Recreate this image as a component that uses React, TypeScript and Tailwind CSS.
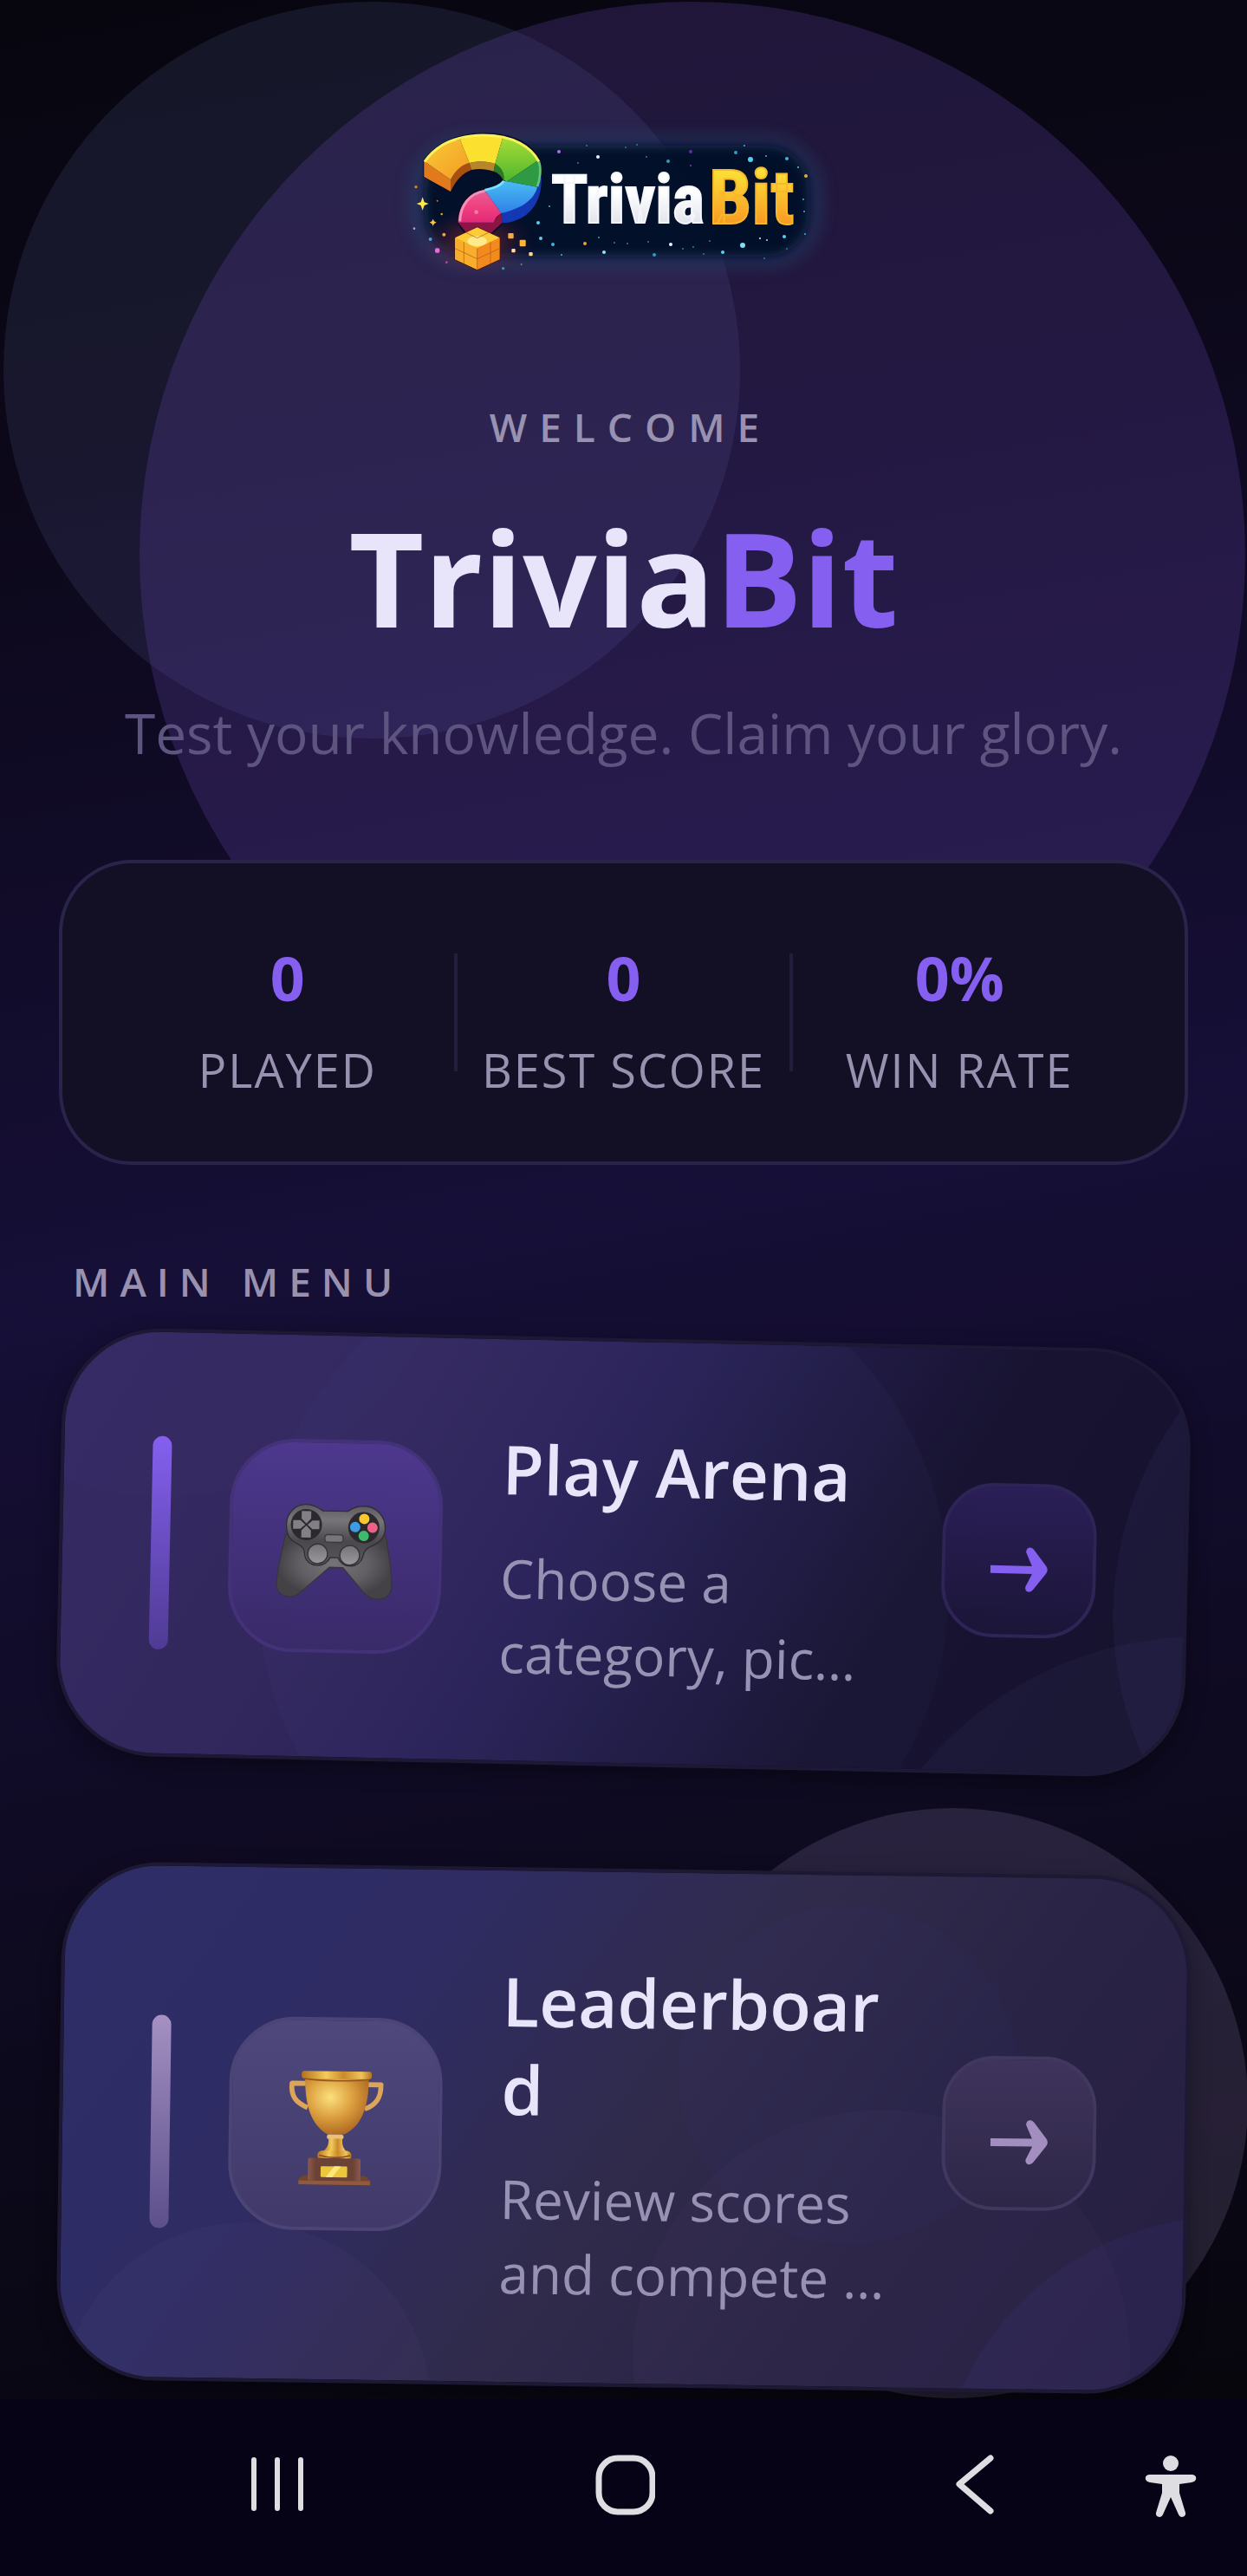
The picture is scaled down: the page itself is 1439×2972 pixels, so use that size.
import type { ReactNode } from 'react';
import clsx from 'clsx';

interface Stat {
  label: string;
  value: string;
}

interface MenuItem {
  title: string;
  description: string;
  icon: ReactNode;
  cardClass: string;
  barClass: string;
  iconClass: string;
  arrowClass: string;
  bubbles: string[];
}

const STATS: Stat[] = [
  { label: 'PLAYED', value: '0' },
  { label: 'BEST SCORE', value: '0' },
  { label: 'WIN RATE', value: '0%' },
];

// x, y, radius, colour
const STARS: [number, number, number, string][] = [
  [55, 45, 2, '#b26cf0'],
  [100, 51, 2, '#e8f4ff'],
  [207, 45, 2, '#5d2fa8'],
  [207, 61, 1, '#7d3fc4'],
  [181, 56, 2, '#2f9fc0'],
  [259, 46, 2, '#2f9fc0'],
  [269, 38, 1, '#3fb6d8'],
  [276, 54, 3, '#55cdec'],
  [294, 50, 1, '#3fb6d8'],
  [318, 53, 2, '#3fb6d8'],
  [331, 63, 1, '#59c8e8'],
  [340, 73, 2, '#e0b040'],
  [337, 100, 1, '#3fb6d8'],
  [338, 114, 1, '#3fb6d8'],
  [339, 140, 1, '#3fb6d8'],
  [315, 143, 2, '#59d2f0'],
  [295, 147, 1, '#9fe4f4'],
  [287, 145, 1, '#e8f4ff'],
  [267, 153, 3, '#7fe0f6'],
  [244, 161, 2, '#59d2f0'],
  [184, 152, 2, '#f4f0ff'],
  [165, 164, 2, '#2f9fc0'],
  [107, 161, 2, '#8fe6f8'],
  [85, 151, 2, '#f0a030'],
  [101, 144, 1, '#2f9fc0'],
  [58, 164, 1, '#3fb6d8'],
  [48, 152, 2, '#3fb6d8'],
  [34, 145, 2, '#59d2f0'],
  [31, 127, 2, '#59d2f0'],
  [44, 108, 1, '#3fb6d8'],
  [132, 40, 1, '#2a7f9a'],
  [145, 37, 1, '#2a7f9a'],
  [156, 51, 1, '#2a7f9a'],
  [87, 38, 1, '#2a7f9a'],
  [77, 58, 1, '#2a7f9a'],
  [119, 150, 1, '#2a7f9a'],
  [134, 151, 1, '#2a7f9a'],
  [158, 149, 1, '#2a7f9a'],
  [198, 157, 1, '#2a7f9a'],
  [210, 155, 1, '#2a7f9a'],
  [229, 148, 1, '#2a7f9a'],
  [222, 163, 1, '#2a7f9a'],
  [292, 168, 1, '#2a7f9a'],
  [318, 157, 1, '#2a7f9a'],
];

function Logo() {
  return (
    <svg
      role="img"
      aria-label="TriviaBit logo"
      viewBox="10 0 540 200"
      className="w-[540px] max-w-full h-auto"
    >
      <defs>
        <filter id="soft" x="-20%" y="-40%" width="140%" height="180%">
          <feGaussianBlur stdDeviation="9" />
        </filter>
        <filter id="softer" x="-20%" y="-40%" width="140%" height="180%">
          <feGaussianBlur stdDeviation="6" />
        </filter>
        <linearGradient id="gold" x1="0" y1="0" x2="0" y2="1">
          <stop offset="0.2" stopColor="#fbe136" />
          <stop offset="0.8" stopColor="#f79a24" />
        </linearGradient>
        <linearGradient id="silver" x1="0" y1="0" x2="0" y2="1">
          <stop offset="0.4" stopColor="#ffffff" />
          <stop offset="1" stopColor="#d2d6e2" />
        </linearGradient>
        <linearGradient id="orangeFace" x1="0" y1="0" x2="1" y2="1">
          <stop offset="0" stopColor="#f8cb38" />
          <stop offset="1" stopColor="#f59a23" />
        </linearGradient>
        <linearGradient id="greenFace" x1="0" y1="0" x2="0" y2="1">
          <stop offset="0" stopColor="#a6dc35" />
          <stop offset="1" stopColor="#4fb62e" />
        </linearGradient>
        <linearGradient id="blueFace" x1="0" y1="0" x2="0" y2="1">
          <stop offset="0" stopColor="#49bdf3" />
          <stop offset="1" stopColor="#2f80e8" />
        </linearGradient>
        <linearGradient id="pinkFace" x1="0" y1="0" x2="0" y2="1">
          <stop offset="0" stopColor="#e2609a" />
          <stop offset="0.5" stopColor="#f0407f" />
          <stop offset="1" stopColor="#e22a77" />
        </linearGradient>
        <radialGradient id="ember">
          <stop offset="0" stopColor="#e0452f" stopOpacity="0.5" />
          <stop offset="1" stopColor="#7c1745" stopOpacity="0" />
        </radialGradient>
      </defs>

      {/* Glow and night sky */}
      <rect x="34" y="28" width="474" height="150" rx="64" fill="#24466e" opacity="0.5" filter="url(#soft)" />
      <rect x="50" y="38" width="444" height="128" rx="50" fill="#040a26" opacity="0.92" filter="url(#softer)" />
      <ellipse cx="110" cy="150" rx="66" ry="40" fill="url(#ember)" />

      <g transform="translate(150 0)">
        {STARS.map(([x, y, r, color]) => (
          <circle key={`${x}-${y}`} cx={x} cy={y} r={r} fill={color} />
        ))}
      </g>

      <g transform="translate(30 10) scale(0.33333)">
        {/* Question mark, depth faces first */}
        <path
          d="M58 137L58 192L150 243C172 200 200 168 240 166C275 166 305 170 328 205L334 215C300 228 260 228 215 258C190 275 176 300 176 350L200 388L296 386L328 352C395 345 466 300 464 190C466 90 380 43 265 43C170 43 95 80 58 137Z"
          fill="#0b1238"
          stroke="#0a0d24"
          strokeWidth="6"
        />
        <path d="M58 137L150 202L150 243L58 192Z" fill="#e07a1c" />
        <path d="M150 202C168 168 190 150 215 144L222 168C190 180 168 205 150 243Z" fill="#a8500f" />
        <path d="M215 144C245 136 275 137 304 147L299 173C270 163 245 163 222 168Z" fill="#b8862a" />
        <path d="M304 147C325 158 338 180 334 206C325 188 315 178 299 173Z" fill="#2b7a24" />
        <path d="M464 190C470 290 410 350 328 352L325 316C400 300 440 270 450 226Z" fill="#1437b4" />
        <path d="M176 350L296 350L325 316L328 352L290 386L205 386Z" fill="#8c1546" />
        <path d="M58 137C85 95 130 72 182 62L215 144C190 150 168 168 150 202Z" fill="url(#orangeFace)" />
        <path d="M182 62C230 46 285 46 330 58L304 147C275 137 245 136 215 144Z" fill="#fbe02f" />
        <path d="M330 58C385 66 435 95 452 136L345 208L334 204C338 180 325 158 304 147Z" fill="url(#greenFace)" />
        <path d="M452 136C464 160 464 195 450 227L345 208Z" fill="#2f9a44" />
        <path d="M334 206L345 208L450 227C440 270 400 300 325 318L268 238C295 232 322 225 334 206Z" fill="url(#blueFace)" />
        <path d="M268 238L325 318C312 326 302 338 299 350L176 350C178 290 210 250 268 238Z" fill="url(#pinkFace)" />
        <path d="M60 140C90 95 150 50 262 48C370 48 430 90 456 140" fill="none" stroke="#f7f25a" strokeWidth="9" />
        <path d="M456 140C464 165 460 200 450 226" fill="none" stroke="#62c878" strokeWidth="8" />
        <path d="M182 346C184 290 215 250 268 241" fill="none" stroke="#f48fb8" strokeWidth="9" />
        <path d="M268 238C295 232 322 225 334 206" fill="none" stroke="#7fe0f8" strokeWidth="8" />
        <circle cx="239" cy="314" r="7" fill="#f57aa6" />

        {/* Cube */}
        <path d="M242 367L320 403L320 478L242 514L165 478L165 403Z" fill="#f9a825" stroke="#3a1508" strokeWidth="4" />
        <path d="M242 367L320 403L242 439L165 403Z" fill="#fccb3a" />
        <path d="M165 403L242 439L242 514L165 478Z" fill="#f8ae2c" />
        <path d="M320 403L242 439L242 514L320 478Z" fill="#f28a1e" />
        <ellipse cx="242" cy="415" rx="34" ry="18" fill="#fff2a0" opacity="0.8" />
        <path
          d="M165 440L242 476L320 440M196 417L196 492M288 417L288 492M203 385L242 404L281 385M242 439L242 514"
          fill="none"
          stroke="#b45a10"
          strokeWidth="3"
          opacity="0.7"
        />

        {/* Sparks */}
        <path d="M53 262L59 280L74 285L59 291L53 308L47 291L32 285L47 280Z" fill="#ffe94a" />
        <path d="M89 338L93 346L101 350L93 354L89 362L85 354L77 350L85 346Z" fill="#ffc24a" />
        <rect x="349" y="387" width="19" height="19" rx="3" fill="#f5a84a" />
        <rect x="389" y="410" width="21" height="23" rx="3" fill="#ffb52e" />
        <rect x="361" y="441" width="13" height="13" rx="3" fill="#ffdcae" />
        <rect x="421" y="453" width="13" height="13" rx="3" fill="#ffd48c" />
        <rect x="96" y="439" width="16" height="16" rx="5" fill="#e86ad8" />
        <circle cx="80" cy="408" r="6" fill="#4a9ed8" />
        <circle cx="127" cy="392" r="6" fill="#f5a23a" />
        <circle cx="30" cy="227" r="5" fill="#d88a2a" />
        <circle cx="119" cy="321" r="4" fill="#e0a02a" />
        <circle cx="104" cy="275" r="3" fill="#c08a2a" />
        <circle cx="24" cy="371" r="4" fill="#b0a0b8" />
        <circle cx="136" cy="488" r="4" fill="#b050a0" />
        <circle cx="332" cy="509" r="5" fill="#3a90b0" />
        <circle cx="395" cy="495" r="3" fill="#c07a2a" />
      </g>

      <g className="font-['Liberation_Sans_Narrow','Roboto_Condensed','Roboto',sans-serif] font-bold">
        <text x="196" y="127" fontSize="78" fill="url(#silver)" stroke="#f4f6fb" strokeWidth="2">
          Trivia
        </text>
        <text x="378" y="128" fontSize="88" fill="url(#gold)" stroke="#f9b82c" strokeWidth="2">
          Bit
        </text>
      </g>
    </svg>
  );
}

function GamepadIcon() {
  return (
    <svg viewBox="6 -36 450 450" className="size-[150px]" aria-hidden="true">
      <defs>
        <linearGradient id="padBody" x1="0" y1="0" x2="0" y2="1">
          <stop offset="0" stopColor="#5c5a5e" />
          <stop offset="0.25" stopColor="#77757a" />
          <stop offset="0.6" stopColor="#4a484c" />
          <stop offset="1" stopColor="#5a575c" />
        </linearGradient>
        <radialGradient id="padGrip">
          <stop offset="0" stopColor="#77737a" />
          <stop offset="0.6" stopColor="#615e64" />
          <stop offset="1" stopColor="#454247" />
        </radialGradient>
        <linearGradient id="padStick" x1="0" y1="0" x2="0" y2="1">
          <stop offset="0" stopColor="#757278" />
          <stop offset="1" stopColor="#9a979d" />
        </linearGradient>
      </defs>
      <path
        d="M58 150C45 210 30 290 29 322C30 372 90 380 120 345L212 262L258 262L330 345C362 385 430 375 428 322C428 280 415 200 404 150L230 130Z"
        fill="url(#padGrip)"
        stroke="#39363b"
        strokeWidth="4"
      />
      <path
        d="M127 46C155 46 175 60 186 67L272 67C285 56 305 48 328 48C370 48 402 82 402 124C402 160 380 175 348 190C328 200 330 215 326 225C315 262 262 270 240 228L214 228C192 270 135 262 126 225C122 205 125 198 105 186C75 172 60 158 60 116C60 78 90 46 127 46Z"
        fill="url(#padBody)"
        stroke="#302e32"
        strokeWidth="4"
      />
      <circle cx="129" cy="116" r="54" fill="#2b292d" />
      <circle cx="328" cy="122" r="54" fill="#2b292d" />
      <path
        d="M112 69H145V95L129 112L112 95ZM112 161H145V136L129 119L112 136ZM83 101H108L125 116L108 131H83ZM174 101H150L133 116L150 131H174Z"
        fill="#828086"
      />
      <circle cx="329" cy="92" r="18" fill="#f9c82f" />
      <circle cx="298" cy="121" r="18" fill="#3f9be4" />
      <circle cx="358" cy="122" r="18" fill="#ee6287" />
      <circle cx="328" cy="151" r="18" fill="#3dba6c" />
      <rect x="194" y="149" width="63" height="26" rx="10" fill="#77757a" stroke="#3b393d" strokeWidth="4" />
      <circle cx="170" cy="216" r="34" fill="url(#padStick)" stroke="#333135" strokeWidth="4" />
      <circle cx="281" cy="219" r="34" fill="url(#padStick)" stroke="#333135" strokeWidth="4" />
    </svg>
  );
}

function TrophyIcon() {
  return (
    <svg viewBox="-24 -12 450 450" className="size-[150px]" aria-hidden="true">
      <defs>
        <radialGradient id="cupBowl" cx="0.4" cy="0.35" r="0.7">
          <stop offset="0" stopColor="#fbe07c" />
          <stop offset="0.5" stopColor="#dda040" />
          <stop offset="1" stopColor="#a9641f" />
        </radialGradient>
        <linearGradient id="cupRim" x1="0" y1="0" x2="1" y2="0">
          <stop offset="0" stopColor="#b3721f" />
          <stop offset="0.35" stopColor="#f4cb5a" />
          <stop offset="0.6" stopColor="#c98a2c" />
          <stop offset="0.85" stopColor="#f0c45a" />
          <stop offset="1" stopColor="#b3721f" />
        </linearGradient>
        <linearGradient id="cupBase" x1="0" y1="0" x2="1" y2="0">
          <stop offset="0" stopColor="#8c5a4c" />
          <stop offset="0.15" stopColor="#6a4236" />
          <stop offset="0.85" stopColor="#6a4236" />
          <stop offset="1" stopColor="#8c5a4c" />
        </linearGradient>
      </defs>
      <path d="M98 74H49C45 120 62 140 104 158" fill="none" stroke="#dca558" strokeWidth="17" strokeLinejoin="round" />
      <path d="M308 76H357C358 120 342 146 302 160" fill="none" stroke="#dca558" strokeWidth="17" strokeLinejoin="round" />
      <path d="M94 52H314C318 150 290 225 228 250H174C115 215 95 150 94 52Z" fill="url(#cupBowl)" />
      <rect x="82" y="31" width="243" height="26" rx="10" fill="url(#cupRim)" />
      <path d="M92 58C150 66 260 66 314 58" fill="none" stroke="#93571a" strokeWidth="5" />
      <rect x="172" y="250" width="58" height="16" rx="8" fill="#eabf78" />
      <path d="M178 264H226C224 290 232 300 244 310H158C172 298 180 288 178 264Z" fill="url(#cupRim)" />
      <rect x="140" y="306" width="118" height="34" rx="16" fill="url(#cupRim)" />
      <path d="M146 322C180 332 220 332 254 322" fill="none" stroke="#8b4f16" strokeWidth="5" />
      <path d="M90 392H308L324 408V424H76V406Z" fill="#70442f" />
      <path d="M76 410H324V424H76Z" fill="#8f5a3e" />
      <rect x="108" y="332" width="182" height="78" rx="8" fill="url(#cupBase)" />
      <rect x="152" y="360" width="92" height="38" rx="4" fill="#ecc63c" />
      <path d="M170 398L200 360H222L192 398Z" fill="#fbe87a" />
    </svg>
  );
}

function ArrowIcon() {
  return (
    <svg viewBox="0 -8 66 54" className="w-[66px] h-[54px] mt-5" aria-hidden="true">
      <path d="M0 15H50V24H0Z" fill="currentColor" />
      <path
        d="M41 -1C41 -7 47 -8 50 -4L64 14C67 18 67 20 64 24L50 42C46 47 40 45 41 39L48 25V15Z"
        fill="currentColor"
      />
    </svg>
  );
}

const MENU: MenuItem[] = [
  {
    title: 'Play Arena',
    description: 'Choose a\ncategory, pic…',
    icon: <GamepadIcon />,
    cardClass: 'rotate-[1.2deg] py-[90px] bg-linear-[120deg,#352a63_0%,#33285d_28%,#292155_46%,#171330_72%,#16122e_100%]',
    barClass: 'from-[#8560f0] to-[#4f3b93]',
    iconClass: 'from-[#4d388e] to-[#392a69] border-[#443279]',
    arrowClass: 'text-[#855ff0] from-[#2b1f57] to-[#1b1538] border-[#2e2456]',
    bubbles: [
      '-left-[220px] -top-[470px] size-[660px] bg-[#7890ff]/1',
      'left-[226px] -top-[112px] size-[798px] bg-[#7890ff]/3',
      'left-[1214px] -top-[103px] size-[800px] bg-[#7890ff]/5',
      'left-[907px] top-[326px] size-[834px] bg-[#8890e0]/5',
    ],
  },
  {
    title: 'Leaderboard',
    description: 'Review scores\nand compete …',
    icon: <TrophyIcon />,
    cardClass: 'rotate-[0.8deg] py-[91px] bg-linear-[125deg,#2e2d67_0%,#2e2c63_28%,#302b4b_52%,#292345_72%,#261f42_100%]',
    barClass: 'from-[#a591c2] to-[#5c4f8b]',
    iconClass: 'from-[#4f487d] to-[#403969] border-[#4c4475]',
    arrowClass: 'text-[#a28fc0] from-[#3f345c] to-[#2e2748] border-[#413860]',
    bubbles: [
      'left-[2px] top-[410px] size-[428px] bg-[#8068a0]/7',
      'left-[710px] top-[34px] size-[392px] bg-[#4040a0]/5',
      'left-[662px] top-[270px] size-[574px] bg-[#8068a0]/5',
      'left-[1014px] top-[388px] size-[672px] bg-[#4840b0]/10',
    ],
  },
];

function StatsBar({ stats }: { stats: Stat[] }) {
  return (
    <dl className="flex items-center rounded-[84px] border-4 border-[#29244a] bg-[#130f24] px-[68px] h-[352px] divide-x-4 divide-[#231e3e]">
      {stats.map((stat) => (
        <div key={stat.label} className="flex flex-1 flex-col-reverse items-center justify-center h-[136px] pt-5">
          <dt className="text-[54px] leading-[68px] mt-8 tracking-[2px] whitespace-nowrap text-[#9891b0]">{stat.label}</dt>
          <dd className="text-[70px] leading-[80px] font-bold text-[#855ff0]">{stat.value}</dd>
        </div>
      ))}
    </dl>
  );
}

function MenuCard({ item }: { item: MenuItem }) {
  return (
    <a
      href="#"
      className={clsx(
        'relative flex items-center gap-[68px] overflow-hidden rounded-[114px] border-4 border-[#1d1934] px-[102px] shadow-[0_8px_24px_rgba(0,0,0,0.35)]',
        item.cardClass,
      )}
    >
      {item.bubbles.map((bubble) => (
        <span key={bubble} className={clsx('absolute rounded-full', bubble)} />
      ))}
      <span className={clsx('relative w-[22px] h-[246px] shrink-0 rounded-full bg-linear-to-b', item.barClass)} />
      <span
        className={clsx(
          'relative flex size-[246px] shrink-0 items-center justify-center rounded-[76px] border-4 bg-linear-to-b',
          item.iconClass,
        )}
      >
        {item.icon}
      </span>
      <span className="relative -mb-2 flex min-w-0 flex-1 flex-col gap-8 pt-2">
        <span className="text-[78px] leading-[102px] font-semibold break-all text-[#e8e4fa]">{item.title}</span>
        <span className="text-[62px] leading-[86px] whitespace-pre text-[#9791b3]">{item.description}</span>
      </span>
      <span
        className={clsx(
          'relative flex size-[178px] shrink-0 items-center justify-center rounded-[60px] border-4 bg-linear-to-b',
          item.arrowClass,
        )}
      >
        <ArrowIcon />
      </span>
    </a>
  );
}

function SystemNav() {
  return (
    <nav className="relative flex h-[204px] shrink-0 items-center bg-[#070316] pb-1 pl-[120px] pr-14 text-[#dedde2]">
      <button type="button" aria-label="Recent apps" className="flex flex-1 justify-center">
        <svg viewBox="0 0 72 72" className="size-[72px]" fill="none" stroke="currentColor" strokeWidth="6" strokeLinecap="round">
          <path d="M9 6V62M36 6V62M63 6V62" />
        </svg>
      </button>
      <button type="button" aria-label="Home" className="flex flex-1 justify-center">
        <svg viewBox="0 0 72 72" className="size-[72px]" fill="none" stroke="currentColor" strokeWidth="7">
          <rect x="7" y="4" width="62" height="62" rx="22" />
        </svg>
      </button>
      <button type="button" aria-label="Back" className="flex flex-1 justify-center">
        <svg viewBox="0 0 72 72" className="size-[72px]" fill="none" stroke="currentColor" strokeWidth="7" strokeLinecap="round" strokeLinejoin="round">
          <path d="M60 4L24 34L60 65" />
        </svg>
      </button>
      <button type="button" aria-label="Accessibility" className="flex w-16 justify-center">
        <svg viewBox="0 0 64 80" className="w-16 h-20" fill="currentColor">
          <circle cx="32" cy="14" r="9" />
          <path d="M8 27H56C63 27 63 35 56 36L42 38V48L49 71C50 76 43 78 41 73L32 53L23 73C21 78 14 76 15 71L22 48V38L8 36C1 35 1 27 8 27Z" />
        </svg>
      </button>
    </nav>
  );
}

export default function App() {
  return (
    <div className="flex min-h-screen flex-col bg-[#08060f] font-['Open_Sans',sans-serif]">
      <main className="relative isolate flex flex-1 flex-col overflow-hidden bg-linear-[170deg,#07060f_0%,#0c0819_18%,#160f37_50%,#0e0a20_75%,#07060d_100%] px-[68px] pt-[130px]">
        {/* Floating orbs */}
        <div className="absolute -z-10 left-1 top-0.5 size-[850px] rounded-full bg-[#6a7ab8]/14" />
        <div className="absolute -z-10 left-[161px] top-0.5 size-[1276px] rounded-full bg-[#6648b4]/25" />
        <div className="absolute -z-10 left-[759px] top-[2086px] size-[681px] rounded-full bg-[#a088c0]/19" />

        <header className="flex flex-col items-center text-center">
          <Logo />
          <p className="mt-[130px] pl-4 text-[46px] leading-[64px] font-semibold tracking-[14px] text-[#9891b0]">WELCOME</p>
          <h1 className="mt-[52px] text-[150px] leading-[180px] font-bold text-[#e8e4fa]">
            Trivia<span className="text-[#855ff0]">Bit</span>
          </h1>
          <p className="mt-[50px] mb-[106px] text-[64px] leading-[80px] whitespace-nowrap text-[#5d5580]">
            Test your knowledge. Claim your glory.
          </p>
        </header>

        <StatsBar stats={STATS} />

        <section>
          <h2 className="mt-[102px] mb-[34px] px-4 text-[46px] leading-[64px] font-semibold tracking-[12px] text-[#9891b0]">
            MAIN MENU
          </h2>
          <div className="flex flex-col gap-[118px]">
            {MENU.map((item) => (
              <MenuCard key={item.title} item={item} />
            ))}
          </div>
        </section>
      </main>
      <SystemNav />
    </div>
  );
}
